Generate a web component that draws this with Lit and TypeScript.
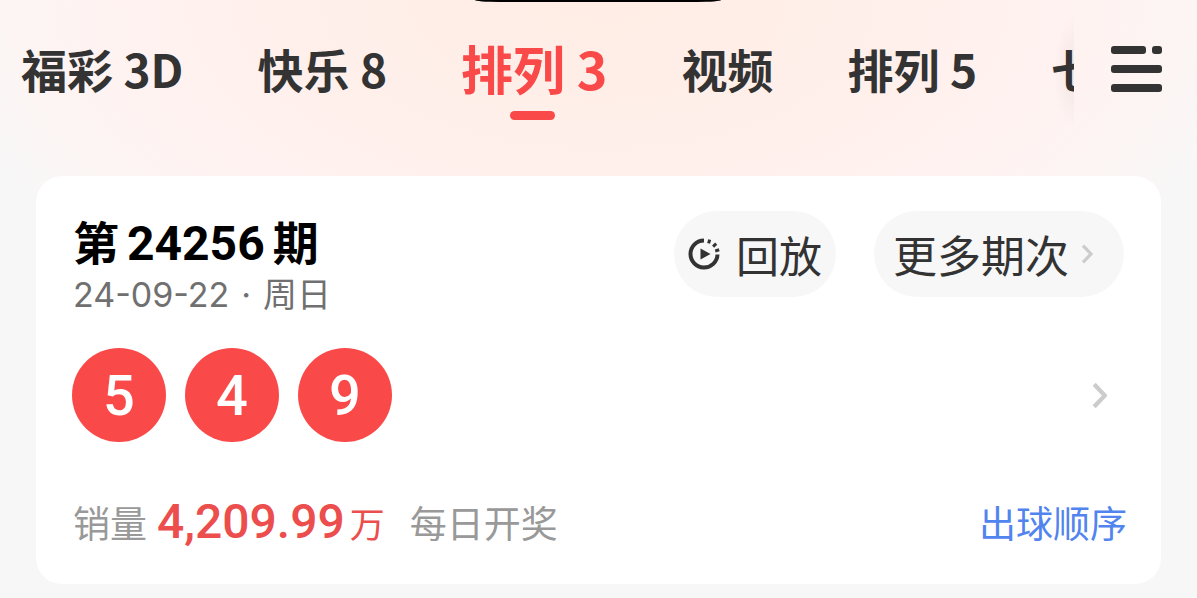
import { LitElement, html, css, svg } from "lit";
import { customElement, property, state } from "lit/decorators.js";
import { classMap } from "lit/directives/class-map.js";

const chevron = svg`<path d="M2 2 L12 12.5 L2 23" fill="none" stroke="currentColor" stroke-width="4"/>`;

@customElement("lottery-tabs")
class LotteryTabs extends LitElement {
  @property({ type: Array }) tabs: string[] = [];
  @state() private active = 2;

  static styles = css`
    :host {
      display: flex;
      height: 144px;
    }
    .tabs {
      position: relative;
      flex: 1;
      min-width: 0;
      display: flex;
      gap: 74px;
      padding-left: 21px;
      overflow: hidden;
    }
    .tabs::after {
      content: "";
      position: absolute;
      right: 0;
      top: 16px;
      width: 20px;
      height: 112px;
      background: radial-gradient(ellipse 100% 50% at 100% 50%, rgba(80, 60, 60, 0.07), transparent);
      pointer-events: none;
    }
    button {
      border: 0;
      padding: 0;
      background: none;
      font-family: inherit;
      color: #333;
      cursor: pointer;
    }
    .tab {
      flex: none;
      position: relative;
      padding-bottom: 8px;
      font-size: 46px;
      line-height: 136px;
      font-weight: 700;
      white-space: nowrap;
    }
    .active {
      color: #fa4949;
      font-size: 52px;
    }
    .active::after {
      content: "";
      position: absolute;
      left: 50%;
      top: 111px;
      width: 45px;
      height: 9px;
      margin-left: -24px;
      border-radius: 5px;
      background: #fa4949;
    }
    .menu {
      flex: none;
      width: 123px;
      padding-left: 37px;
      text-align: left;
    }
    .menu svg {
      display: block;
      margin-top: -6px;
    }
  `;

  render() {
    return html`
      <nav class="tabs">
        ${this.tabs.map(
          (t, i) => html`<button
            class=${classMap({ tab: true, active: i === this.active })}
            @click=${() => (this.active = i)}
          >${t}</button>`
        )}
      </nav>
      <button class="menu" aria-label="菜单">
        <svg width="52" height="48" viewBox="0 0 52 48" fill="#333">
          <rect x="0" y="1" width="35" height="8" rx="3" />
          <rect x="41" y="1" width="10" height="8" rx="3" />
          <rect x="0" y="20" width="51" height="8" rx="3" />
          <rect x="0" y="39" width="51" height="8" rx="3" />
        </svg>
      </button>
    `;
  }
}

@customElement("draw-card")
class DrawCard extends LitElement {
  @property({ type: Array }) balls: number[] = [];

  static styles = css`
    :host {
      display: block;
      background: #fff;
      border-radius: 26px;
      padding: 35px 34px 32px 37px;
    }
    button {
      border: 0;
      font-family: inherit;
      color: #333;
      cursor: pointer;
    }
    .top {
      display: flex;
      justify-content: space-between;
      align-items: flex-start;
      height: 102px;
    }
    h1 {
      display: flex;
      align-items: baseline;
      gap: 8px;
      margin: 0;
      font-size: 46px;
      line-height: 58px;
      font-weight: 700;
      color: #000;
    }
    .num {
      font-family: Roboto, "Noto Sans CJK SC", sans-serif;
      line-height: 1;
    }
    .issue {
      font-size: 48px;
    }
    .date {
      display: flex;
      align-items: baseline;
      gap: 12px;
      margin: 0;
      font-size: 34px;
      line-height: 48px;
      color: #707070;
    }
    .day {
      font-family: Inter, "Noto Sans CJK SC", sans-serif;
      line-height: 1;
    }
    .actions {
      display: flex;
      gap: 38px;
      margin-right: 3px;
    }
    .pill {
      display: flex;
      align-items: center;
      height: 86px;
      border-radius: 43px;
      background: #f7f7f7;
      font-size: 43px;
      padding: 0 14px;
      gap: 16px;
    }
    .more {
      padding: 0 31px 0 19px;
      gap: 12px;
      font-size: 44px;
    }
    .arrow {
      color: #ccc;
    }
    .balls {
      display: flex;
      align-items: center;
      width: 100%;
      gap: 19px;
      margin-top: 35px;
      padding: 0 20px 0 0;
      background: none;
    }
    .ball {
      width: 94px;
      height: 94px;
      margin-left: -1px;
      margin-right: 1px;
      border-radius: 50%;
      background: #fa4949;
      color: #fff;
      font-size: 56px;
      line-height: 96px;
      font-weight: 500;
      text-align: center;
    }
    .go {
      margin-left: auto;
      color: #ccc;
    }
    .bottom {
      display: flex;
      align-items: baseline;
      margin-top: 51px;
      font-size: 37px;
      line-height: 58px;
      color: #999;
    }
    .sales {
      margin-left: 10px;
      color: #ec4d4d;
      font-size: 48px;
      font-weight: 500;
    }
    .unit {
      margin-left: 5px;
      color: #ec4d4d;
      font-size: 35px;
    }
    .often {
      margin-left: 25px;
    }
    a {
      margin-left: auto;
      color: #5184ee;
      text-decoration: none;
    }
  `;

  render() {
    return html`
      <div class="top">
        <div>
          <h1><span>第</span><span class="num issue">24256</span><span>期</span></h1>
          <p class="date"><span class="day">24-09-22</span><span class="day">·</span><span>周日</span></p>
        </div>
        <div class="actions">
          <button class="pill">
            <svg width="32" height="32" viewBox="0 0 32 32" fill="none" stroke="#333">
              <path d="M16 2.5 A13.5 13.5 0 1 0 29.5 16.5" stroke-width="4" />
              <path d="M20.6 5.4 L21.7 1.6 M25.1 8.6 L28.2 5.6 M27.2 13 L31.2 11.8" stroke-width="3" />
              <path d="M12.5 10.5 L22.5 16 L12.5 21.5 Z" fill="#333" stroke="none" />
            </svg>
            <span>回放</span>
          </button>
          <button class="pill more">
            <span>更多期次</span>
            <svg class="arrow" width="12" height="20" viewBox="0 0 14 25">${chevron}</svg>
          </button>
        </div>
      </div>
      <button class="balls" aria-label="开奖号码">
        ${this.balls.map((n) => html`<span class="num ball">${n}</span>`)}
        <svg class="go" width="15" height="27" viewBox="0 0 14 25">${chevron}</svg>
      </button>
      <div class="bottom">
        <span>销量</span>
        <span class="num sales">4,209.99</span>
        <span class="unit">万</span>
        <span class="often">每日开奖</span>
        <a href="#order">出球顺序</a>
      </div>
    `;
  }
}

@customElement("app-root")
class AppRoot extends LitElement {
  static styles = css`
    :host {
      display: block;
      position: relative;
      min-height: 100vh;
      box-sizing: border-box;
      padding-bottom: 14px;
      overflow: hidden;
      font-family: "Noto Sans CJK SC", sans-serif;
      background: radial-gradient(ellipse 56% 360px at 50% 0, #ffede5 0%, #ffefea 38%, #fff2f0 70%, #fcf5f4 88%, #f8f7f7 100%) #f8f7f7;
    }
    .notch {
      position: absolute;
      top: 0;
      left: 50%;
      width: 246px;
      height: 2px;
      margin-left: -124px;
      border-radius: 0 0 24px 24px / 0 0 2px 2px;
      background: #000;
    }
    .card {
      margin: 32px 36px 0;
    }
  `;

  render() {
    return html`
      <div class="notch"></div>
      <lottery-tabs .tabs=${["福彩 3D", "快乐 8", "排列 3", "视频", "排列 5", "七"]}></lottery-tabs>
      <draw-card class="card" .balls=${[5, 4, 9]}></draw-card>
    `;
  }
}
